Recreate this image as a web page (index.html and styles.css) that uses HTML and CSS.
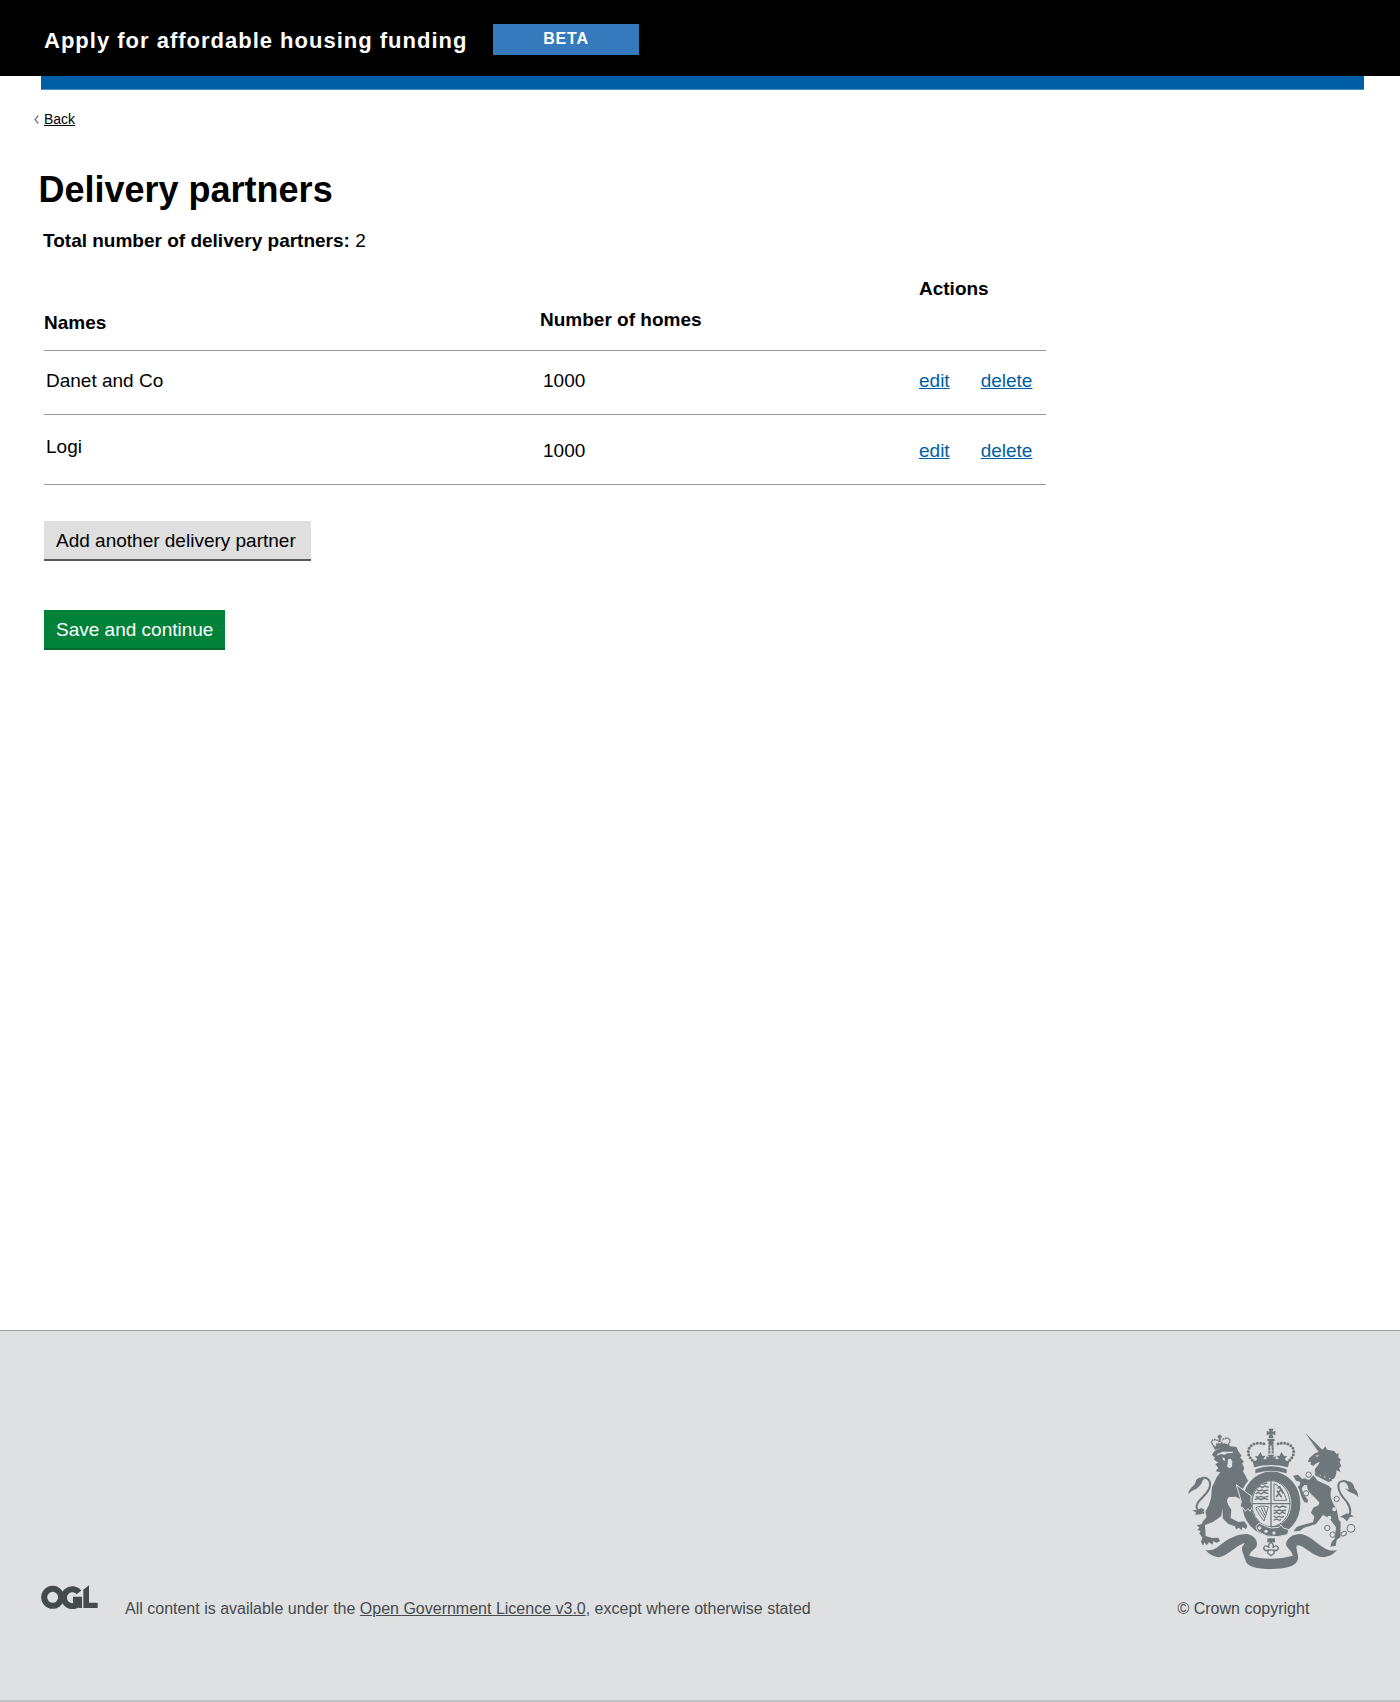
FILE: index.html
```html
<!DOCTYPE html>
<html lang="en">
<head>
<meta charset="utf-8">
<title>Delivery partners</title>
<link rel="stylesheet" href="styles.css">
</head>
<body>
<header class="header">
  <span class="header-title">Apply for affordable housing funding</span>
  <span class="phase-tag">BETA</span>
</header>
<div class="header-bar"></div>
<main class="main">
  <a class="back" href="#"><svg class="back-icon" width="5" height="9" viewBox="0 0 5 9"><path d="M4.3.5 1 4.5l3.3 4" fill="none" stroke="#6f777b" stroke-width="1.2"/></svg><span class="back-text">Back</span></a>
  <h1 class="heading">Delivery partners</h1>
  <p class="total"><strong>Total number of delivery partners:</strong> 2</p>
  <div class="partners">
    <div class="row row-head">
      <span class="names-head">Names</span>
      <span class="homes-head">Number of homes</span>
      <span class="actions-head">Actions</span>
    </div>
    <div class="row row-first">
      <span class="name">Danet and Co</span>
      <span class="homes">1000</span>
      <span class="actions"><a class="link" href="#">edit</a><a class="link" href="#">delete</a></span>
    </div>
    <div class="row row-second">
      <span class="name">Logi</span>
      <span class="homes">1000</span>
      <span class="actions"><a class="link" href="#">edit</a><a class="link" href="#">delete</a></span>
    </div>
  </div>
  <button class="button button-secondary">Add another delivery partner</button>
  <button class="button button-primary">Save and continue</button>
</main>
<footer class="footer">
  <svg class="ogl" width="57" height="24" viewBox="0 0 171 72" role="img" aria-label="Open Government Licence">
    <g fill="none" stroke="#454a4c" stroke-width="18">
      <circle cx="35" cy="37" r="25.500"/>
      <path d="M114 22A25.500 25.500 0 1 0 114 54V44H96"/>
    </g>
    <path d="M106 39h17v30h-9zM127 14 144 1v52h26v16h-43z" fill="#454a4c"/>
  </svg>
  <p class="licence">All content is available under the <a class="licence-link" href="#">Open Government Licence v3.0</a>, except where otherwise stated</p>
  <div class="copyright">
    <svg class="crest" width="175" height="147" viewBox="45 45 525 441" fill="#6f777b" aria-hidden="true">
      <!-- ribbon -->
      <path d="M106 420Q128 424 148 407C175 385 205 371 232 372C255 377 264 394 260 408C256 419 242 421 238 437Q268 446 303 446T368 437C366 421 350 415 348 403C350 382 371 371 394 372C426 378 449 411 475 420Q488 423 501 420C485 439 467 443 449 440C419 432 402 405 382 406C374 412 386 427 384 447C380 469 345 477 303 477S229 470 226 449C220 429 212 420 218 408C225 400 227 399 218 401C197 408 172 438 146 442Q124 440 106 420Z"/>
      <!-- lion -->
      <path d="M133 124Q163 103 199 111L205 124 215 138 210 142 222 156 216 159 223 175 219 184C230 205 240 218 234 228L216 237 201 228 199 231 220 246 244 263 240 277 244 287 239 300 234 293 228 301 221 291 213 296 210 285 216 279 209 266 197 260 178 261C164 270 174 283 184 299L182 324 205 336 225 334 233 346 228 358 218 351 214 361 207 353 198 358 195 349 175 342 159 326 157 294 154 318 129 336 105 345 107 378 127 384 145 383 150 393 141 398 130 394 128 404 117 397 110 406 103 397 99 407 93 395 97 383 88 370 92 364 82 359 89 353 80 346 96 342 98 335 110 321 106 305Q119 285 123 264L126 232 140 202 151 187 137 184 145 174 136 162 145 158 131 148 135 143 126 134Z"/>
      <path d="M142 132 158 125 190 125 187 129 172 130 163 134 153 132 140 137zM157 141l7 4 2 9-7-5zM174 148l8-2 5 8-1 16-8 5-7-6 2-9z" fill="#dee0e2"/>
      <path d="M102 309C77 303 76 290 85 276C101 256 128 239 118 212C109 197 91 202 84 218" fill="none" stroke="#6f777b" stroke-width="6"/>
      <path d="M102 208C88 197 77 207 76 220C70 230 56 236 55 253C64 239 78 241 89 227C99 219 95 211 102 208ZM104 299 93 294 82 301 66 300 79 308 74 314 94 313Z"/>
      <!-- lion's crown -->
      <path d="M131 111Q153 99 178 105L180 114Q154 109 135 120ZM138 107l1-9 5 4 2-6 4 6 6-8 3 8 5-4 2 5 5-3v6z"/>
      <path d="M133 110C113 91 133 83 147 94M174 105C190 84 168 79 156 91" fill="none" stroke="#6f777b" stroke-width="5" stroke-dasharray="5 2"/>
      <path d="M143 77h12v6h-12zM146 74h6v22h-6z"/>
      <!-- unicorn -->
      <path d="M405 68 457 119 462 115 466 109 471 119 492 123 500 132 506 130 505 143 513 148 509 157 514 169 507 174 512 186 499 181Q500 200 489 208L433 188C429 176 446 169 449 155L437 161 430 168 421 163 423 156 414 155 418 144 436 129 446 126Z"/>
      <path d="M436 137 447 135 442 141Z" fill="#dee0e2"/>
      <path d="M431 177 437 197 449 199 454 210 469 209 475 219 493 216" fill="none" stroke="#dee0e2" stroke-width="5"/>
      <path d="M434 180l4 11 9-6 3 14 9-9 5 14 9-9 5 13 9-7-2 12-10 3-40-20z"/>
      <path d="M430 196 443 212 476 227 485 236C475 256 489 283 500 297L506 329 512 336 511 382 500 389 497 407 481 410 485 396 494 386 498 352 480 327 459 314 448 329 438 342 402 353 389 363 371 364 379 352 395 346 429 337 433 320 423 308 430 293 446 285 448 277C431 258 407 242 412 226L403 225 395 235 400 253 414 270 412 279 402 275 390 253 378 234 389 226 391 216 378 212 369 197 384 194 396 206 418 209Z"/>
      <path d="M523 325Q529 319 531 328C548 309 541 291 530 275C501 245 497 214 519 213C532 212 539 222 538 235" fill="none" stroke="#6f777b" stroke-width="6"/>
      <path d="M525 216C540 209 553 222 553 235Q562 240 565 261C552 247 535 250 525 234L536 240Q536 225 525 216ZM531 310 553 319 536 322 531 333 521 324 510 320Z"/>
      <!-- chain -->
      <g fill="none" stroke="#6f777b" stroke-width="3">
        <circle cx="416" cy="194" r="8"/><circle cx="404" cy="212" r="6"/><circle cx="408" cy="250" r="8"/><circle cx="500" cy="267" r="8"/><circle cx="472" cy="354" r="8"/><circle cx="488" cy="374" r="8"/><ellipse cx="521" cy="371" rx="9" ry="6" transform="rotate(-25 521 371)"/><circle cx="543" cy="355" r="12"/>
      </g>
      <circle cx="493" cy="298" r="6" fill="#dee0e2"/><circle cx="478" cy="323" r="6" fill="#dee0e2"/>
      <!-- garter and shield -->
      <ellipse cx="303" cy="281" rx="93" ry="103" fill="#dee0e2"/>
      <ellipse cx="304" cy="281" rx="73.500" ry="83" fill="none" stroke="#6f777b" stroke-width="27"/>
      <path d="M199 224 220 240 244 258 242 272 248 288 240 304 234 296 226 304 219 293 210 290 214 275Z" stroke="#dee0e2" stroke-width="3"/>
      <g fill="none" stroke="#6f777b" stroke-width="3">
        <ellipse cx="303" cy="281" rx="57" ry="69"/>
        <path d="M303 212V350M246 281H361" stroke-width="4"/>
        <path stroke-width="4" d="M262 233l8-5 7 5 8-5 11 4M260 239l6 4 9-3 7 3 12-3M257 252l8-5 8 5 8-5 14 4M257 259l7 3 8-3 10 3 13-3M254 269l10-4 9 4 8-4 14 4M277 223l15-4M311 292l9-4 8 5 9-5 13 4M311 300l8 3 9-3 10 3 10-3M311 311l9-4 8 5 9-5 10 4M311 319l8 3 9-3 8 3 6-3M311 331l9-4 8 4 6-3"/>
        <path d="M257 294Q270 285 295 290L282 333Q267 315 257 294ZM265 295l18 28M273 292l12 25M281 291l7 19"/>
        <path d="M312 221Q339 231 350 271H312z"/>
        <path stroke-width="5" d="M319 261l8-11 8 12M327 250l-6-8M325 247l9-8 6 12M323 235l6-4 4 7"/>
      </g>
      <path d="M258 350 267 339 290 350 304 354 327 352 333 345 340 354 357 359 352 374Q322 384 291 378L263 364Z" stroke="#dee0e2" stroke-width="3"/>
      <g fill="#dee0e2"><circle cx="269" cy="354" r="5"/><circle cx="288" cy="364" r="5"/><circle cx="312" cy="369" r="5"/></g>
      <!-- pendant -->
      <path d="M292 385H315V397H292Z"/>
      <path d="M303 397Q314 405 308 413Q321 402 325 414Q323 424 311 422L313 429 303 437 293 429 295 422Q283 424 281 414Q285 402 298 413Q292 405 303 397Z" fill="none" stroke="#6f777b" stroke-width="4"/>
      <path d="M292 420h22" stroke="#6f777b" stroke-width="4"/>
      <!-- crown -->
      <path d="M248 154Q303 138 358 154L354 172Q303 158 252 172Z"/>
      <path d="M256 178Q303 160 350 178V190Q303 174 256 190Z"/>
      <path d="M272 126l5 12 10-1-7 9 8 9h-30l3-9-7-8 9 1zM334 126l-5 12-10-1 7 9-8 9h30l-3-9 7-8-9 1zM293 134h20l-5 9 9-5v17l-9-5 4 8h-18l4-8-9 5v-17l9 5z"/>
      <path d="M295 56h16l-4 10 9-4v14l-9-4 4 13h-16l4-13-9 4V62l9 4zM292 87h22v6h-22z"/>
      <circle cx="303" cy="99" r="8"/>
      <path d="M298 106v25M308 106v25" fill="none" stroke="#6f777b" stroke-width="6" stroke-dasharray="7 1"/>
      <path d="M247 151C219 122 241 89 291 103M359 151C387 122 365 89 315 103" fill="none" stroke="#6f777b" stroke-width="9" stroke-linecap="round" stroke-dasharray="0 10"/>
    </svg>
    <span class="copyright-text">© Crown copyright</span>
  </div>
</footer>
</body>
</html>
```

FILE: styles.css
```css
* {
  box-sizing: border-box;
}

body {
  margin: 0;
  min-height: 1702px;
  display: flex;
  flex-direction: column;
  background: #fff;
  color: #000;
  font: 19px/24px "Liberation Sans", Arial, sans-serif;
}

.header {
  height: 76px;
  padding: 24px 44px 0;
  display: flex;
  align-items: flex-start;
  gap: 25px;
  background: #000;
  color: #fff;
  font-weight: bold;
  letter-spacing: 1px;
}

.header-title {
  width: 424px;
  padding-top: 5px;
  font-size: 22px;
  white-space: nowrap;
}

.phase-tag {
  width: 146px;
  height: 31px;
  background: #347abd;
  font-size: 16px;
  line-height: 29px;
  letter-spacing: 0.8px;
  text-align: center;
}

.header-bar {
  height: 14px;
  margin: 0 36px 0 41px;
  background: #005ea5;
  border-bottom: 1px solid #4d8ec0;
}

.main {
  flex: 1;
  padding: 21px 34px 0;
  display: flex;
  flex-direction: column;
  align-items: flex-start;
}

.back {
  display: flex;
  align-items: center;
  gap: 5px;
  height: 16px;
  color: #000;
  font-size: 14px;
  line-height: 16px;
  text-decoration: none;
}

.back-text {
  text-decoration: underline;
}

.heading {
  margin: 43px 0 0 4.5px;
  font-size: 36px;
  line-height: 40px;
}

.total {
  margin: 19px 0 0 9px;
}

.partners {
  width: 1002px;
  margin-left: 10px;
}

.row {
  display: grid;
  grid-template-columns: 495px 380px 1fr;
  align-items: start;
  border-bottom: 1px solid #979797;
}

.row-head {
  height: 98px;
  font-weight: bold;
}

.names-head {
  padding-top: 58px;
}

.homes-head {
  padding: 55px 0 0 1px;
}

.actions-head {
  padding-top: 24px;
}

.row-first {
  height: 64px;
  padding-top: 18px;
}

.row-second {
  height: 70px;
  padding-top: 20px;
}

.name {
  padding-left: 2px;
}

.homes {
  padding-left: 4px;
}

.row-second .homes,
.row-second .actions {
  padding-top: 4px;
}

.actions {
  display: flex;
  gap: 31px;
}

.link {
  color: #005ea5;
}

.button {
  height: 40px;
  padding: 1px 0 0 12px;
  border: 0;
  margin-left: 10px;
  font: inherit;
  line-height: 38px;
  text-align: left;
}

.button-secondary {
  width: 267px;
  margin-top: 36px;
  background: #dfdfdf;
  border-bottom: 2px solid #5a5a5a;
  color: #000;
}

.button-primary {
  width: 181px;
  margin-top: 49px;
  background: #00823b;
  border-bottom: 2px solid #00692f;
  color: #fff;
}

.footer {
  height: 372px;
  padding: 0 40px 81px 41px;
  display: flex;
  align-items: flex-end;
  border-top: 1px solid #a1a4a6;
  border-bottom: 2px solid #bfbfbf;
  background: #dee0e2;
  color: #454a4c;
  font-size: 16px;
  line-height: 20px;
}

.ogl {
  margin-bottom: 10px;
}

.licence {
  margin: 0 0 0 27px;
}

.licence-link {
  color: inherit;
}

.copyright {
  margin-left: auto;
  width: 182.5px;
  display: flex;
  flex-direction: column;
}

.crest {
  margin: 0 0 27px 7.5px;
}
```
